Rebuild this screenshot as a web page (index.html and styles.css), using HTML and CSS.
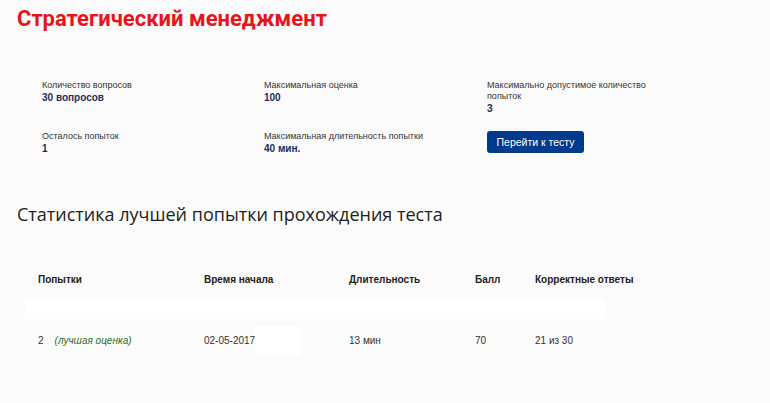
FILE: index.html
```html
<!DOCTYPE html>
<html lang="ru">
<head>
    <meta charset="UTF-8">
    <title>Стратегический менеджмент</title>
    <link rel="stylesheet" href="styles.css">
</head>
<body>

    <h1 class="title">Стратегический менеджмент</h1>

    <!-- Test info -->
    <div class="info">
        <div class="info-item">
            <div class="info-label">Количество вопросов</div>
            <div class="info-value">30 вопросов</div>
        </div>
        <div class="info-item">
            <div class="info-label">Максимальная оценка</div>
            <div class="info-value">100</div>
        </div>
        <div class="info-item">
            <div class="info-label">Максимально допустимое количество попыток</div>
            <div class="info-value">3</div>
        </div>
        <div class="info-item">
            <div class="info-label">Осталось попыток</div>
            <div class="info-value">1</div>
        </div>
        <div class="info-item">
            <div class="info-label">Максимальная длительность попытки</div>
            <div class="info-value">40 мин.</div>
        </div>
        <div class="info-item">
            <button class="btn">Перейти к тесту</button>
        </div>
    </div>

    <h2 class="subtitle">Статистика лучшей попытки прохождения теста</h2>

    <!-- Best attempt table -->
    <div class="stats">
        <div class="row head">
            <div class="cell">Попытки</div>
            <div class="cell">Время начала</div>
            <div class="cell">Длительность</div>
            <div class="cell">Балл</div>
            <div class="cell">Корректные ответы</div>
        </div>
        <div class="band"></div>
        <div class="row body-row">
            <div class="cell">2 <span class="best">(лучшая оценка)</span></div>
            <div class="cell">02-05-2017<span class="hidden-time"></span></div>
            <div class="cell">13 мин</div>
            <div class="cell">70</div>
            <div class="cell">21 из 30</div>
        </div>
    </div>

</body>
</html>
```

FILE: styles.css
```css
/* Global */
body {
    margin: 0;
    padding: 0;
    background: #fcfbfb;
    font-family: 'Liberation Sans', Arial, sans-serif;
    color: #333;
}

.title {
    margin: 0;
    padding: 5px 0 0 17px;
    font-family: 'Roboto', sans-serif;
    font-size: 22px;
    font-weight: 700;
    line-height: 28px;
    color: #e8141c;
}

/* Info block */
.info {
    display: grid;
    grid-template-columns: 222px 223px 190px;
    row-gap: 16px;
    padding: 47px 0 0 42px;
}

.info-label {
    font-size: 9px;
    line-height: 11px;
    color: #333;
    width: 170px;
}

.info-value {
    font-size: 10px;
    font-weight: 700;
    line-height: 13px;
    color: #1b2d5c;
}

.btn {
    display: block;
    width: 97px;
    height: 22px;
    padding: 0;
    border: none;
    border-radius: 3px;
    background: #003a8c;
    color: #fff;
    font-family: 'Liberation Sans', Arial, sans-serif;
    font-size: 10.5px;
    cursor: pointer;
}

.subtitle {
    margin: 0;
    padding: 48px 0 0 17px;
    font-family: 'Open Sans', sans-serif;
    font-size: 18px;
    font-weight: 400;
    line-height: 22px;
    color: #222;
}

/* Stats table */
.stats {
    padding: 39px 0 0 25px;
    font-size: 10px;
    color: #333;
}

.row {
    display: grid;
    grid-template-columns: 166px 145px 126px 60px 200px;
    align-items: center;
}

.row.head {
    height: 30px;
    font-weight: 700;
    color: #222;
}

.row .cell {
    padding-left: 13px;
    display: flex;
    align-items: center;
}

.band {
    width: 580px;
    height: 20px;
    margin-top: 5px;
    background: #fff;
}

.body-row {
    height: 34px;
    margin-top: 4px;
}

.best {
    margin-left: 11px;
    font-style: italic;
    color: #2b6e2b;
}

.hidden-time {
    display: inline-block;
    width: 45px;
    height: 29px;
    background: #fff;
}
```
